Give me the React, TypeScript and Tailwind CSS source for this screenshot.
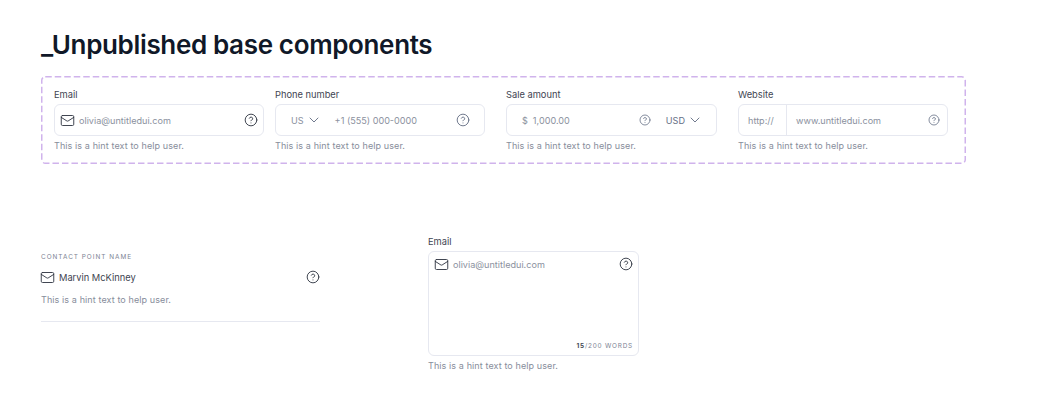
import type { ReactNode } from "react";
import { ChevronDown, CircleHelp, Mail } from "lucide-react";

function Hint() {
  return <p className="mt-[4px] text-[9px] leading-[12px] tracking-[0.1px] text-[#878d9b]">This is a hint text to help user.</p>;
}

function Label({ children }: { children: string }) {
  return <label className="block mb-[3px] text-[9.3px] leading-[12px] text-[#3f4552]">{children}</label>;
}

function Box({ children }: { children: ReactNode }) {
  return <div className="flex items-center h-[32px] rounded-[6px] border border-[#e6e8f0] bg-white">{children}</div>;
}

function Help({ size = 14, color = "text-[#343a46]" }: { size?: number; color?: string }) {
  return <CircleHelp size={size} strokeWidth={1.6} className={`shrink-0 ${color}`} />;
}

export default function App() {
  return (
    <div className="font-['Inter',sans-serif] w-[1037px] h-[411px] bg-white pl-[41px] pt-[29px] overflow-hidden">
      <h1 className="text-[26px] leading-[32px] font-semibold text-[#101828] tracking-[-0.35px]">_Unpublished base components</h1>

      <div className="relative mt-[15px] w-[925px] h-[88px] pl-[13px] pt-[13px] flex">
        <svg className="absolute left-0 top-0" width="925" height="88" fill="none">
          <rect x="0.75" y="0.75" width="923.5" height="86.5" rx="3.5" stroke="#d0b3ec" strokeWidth="1.5" strokeDasharray="6.5 3" />
        </svg>

        <div className="w-[210px]">
          <Label>Email</Label>
          <Box>
            <Mail size={15} strokeWidth={1.5} className="ml-[5px] text-[#343a46]" />
            <span className="ml-[4px] pt-px flex-1 text-[9.1px] text-[#8b919e]">olivia@untitledui.com</span>
            <Help />
            <span className="w-[5px]" />
          </Box>
          <Hint />
        </div>

        <div className="w-[210px] ml-[11px]">
          <Label>Phone number</Label>
          <Box>
            <span className="ml-[15px] pt-px text-[9.1px] text-[#8b919e]">US</span>
            <ChevronDown size={16} strokeWidth={1.4} className="ml-[2px] text-[#667085]" />
            <span className="ml-[13px] pt-px flex-1 text-[9.1px] text-[#8b919e]">+1 (555) 000-0000</span>
            <Help size={14} color="text-[#667085]" />
            <span className="w-[14px]" />
          </Box>
          <Hint />
        </div>

        <div className="w-[211px] ml-[21px]">
          <Label>Sale amount</Label>
          <Box>
            <span className="ml-[15px] pt-px text-[9.1px] text-[#8b919e]">$</span>
            <span className="ml-[5px] pt-px flex-1 text-[9.1px] text-[#8b919e]">1,000.00</span>
            <Help size={12} color="text-[#667085]" />
            <span className="ml-[15px] pt-px text-[9.1px] text-[#667085]">USD</span>
            <ChevronDown size={16} strokeWidth={1.4} className="ml-[2px] mr-[13px] text-[#667085]" />
          </Box>
          <Hint />
        </div>

        <div className="w-[210px] ml-[21px]">
          <Label>Website</Label>
          <Box>
            <span className="h-full flex items-center pt-px pl-[9px] w-[48px] border-r border-[#e6e8f0] text-[9.1px] text-[#8b919e]">http://</span>
            <span className="ml-[9px] pt-px flex-1 text-[9.1px] text-[#8b919e]">www.untitledui.com</span>
            <Help size={12} color="text-[#667085]" />
            <span className="w-[7px]" />
          </Box>
          <Hint />
        </div>
      </div>

      <div className="mt-[72px] flex items-start">
        <div className="w-[279px] mt-[16px]">
          <p className="text-[6.4px] leading-[10px] tracking-[1px] uppercase text-[#7d8494]">Contact point name</p>
          <div className="mt-[7px] flex items-center h-[16px]">
            <Mail size={15} strokeWidth={1.5} className="-ml-px text-[#343a46]" />
            <span className="ml-[4px] pt-px flex-1 text-[9.3px] text-[#3f4552]">Marvin McKinney</span>
            <Help />
          </div>
          <p className="mt-[9px] text-[9px] leading-[12px] tracking-[0.1px] text-[#878d9b]">This is a hint text to help user.</p>
          <div className="mt-[15px] h-px bg-[#e6e8f0]" />
        </div>

        <div className="w-[211px] ml-[108px]">
          <Label>Email</Label>
          <div className="relative h-[105px] rounded-[6px] border border-[#e6e8f0] bg-white">
            <div className="flex items-center h-[14px] mt-[5px] pl-[5px] pr-[5px]">
              <Mail size={15} strokeWidth={1.5} className="text-[#343a46]" />
              <span className="ml-[4px] pt-px flex-1 text-[9.1px] text-[#8b919e]">olivia@untitledui.com</span>
              <Help />
            </div>
            <p className="absolute right-[5px] bottom-[4px] text-[6.4px] leading-[10px] tracking-[0.8px] uppercase text-[#7d8494]">
              <span className="font-bold text-[#3f4552]">15</span>/200 words
            </p>
          </div>
          <Hint />
        </div>
      </div>
    </div>
  );
}
